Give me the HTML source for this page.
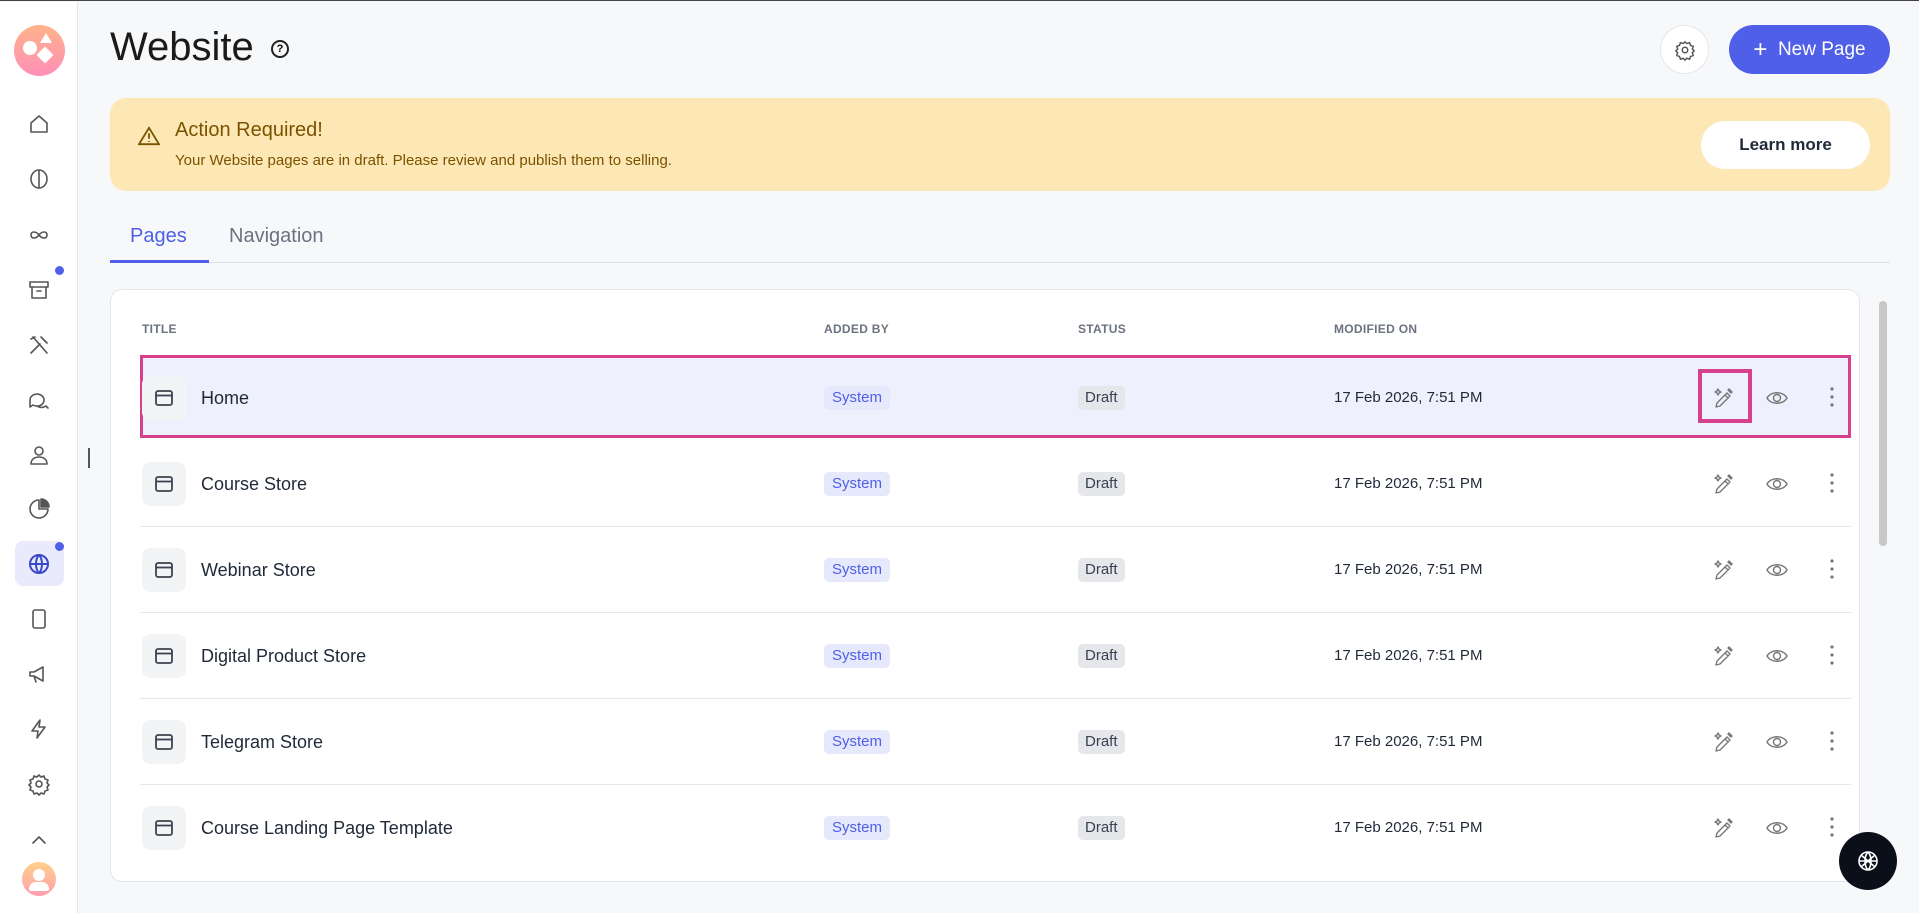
<!DOCTYPE html>
<html><head><meta charset="utf-8"><style>
*{box-sizing:border-box;margin:0;padding:0}
body{width:1919px;height:912px;overflow:hidden;background:#f7f8fa;font-family:"Liberation Sans",sans-serif;position:relative;border-top:1px solid #444}
.sb{position:absolute;left:0;top:1px;width:78px;height:911px;background:#fff;border-right:1px solid #e5e7eb}
.si{position:absolute;left:27px;width:24px;height:24px}
.si svg{width:24px;height:24px;fill:none;stroke:#555;stroke-width:1.6;stroke-linecap:round;stroke-linejoin:round}
.dot{position:absolute;left:55px;width:9px;height:9px;border-radius:50%;background:#4f5fe8}
.abs{position:absolute}
.card{position:absolute;left:110px;top:288px;width:1750px;height:593px;background:#fff;border:1px solid #e4e6ea;border-radius:12px}
.hdr{position:absolute;top:321px;font-size:12px;color:#6b7280;font-weight:bold;letter-spacing:.3px}
.row{position:absolute;left:140px;width:1711px;height:86px;border-bottom:1px solid #e5e7eb}
.ib{position:absolute;left:2px;top:21px;width:44px;height:44px;background:#f3f4f6;border-radius:8px}
.ib svg{position:absolute;left:12px;top:12px}
.t{position:absolute;left:61px;top:33px;font-size:18px;color:#1f2937}
.sys{position:absolute;left:684px;top:31px;height:24px;padding:0 8px;line-height:24px;font-size:15px;color:#4f5fe8;background:#e6e9fb;border-radius:5px}
.dr{position:absolute;left:938px;top:31px;height:24px;padding:0 7px;line-height:24px;font-size:15px;color:#374151;background:#e5e7eb;border-radius:5px}
.dt{position:absolute;left:1194px;top:34px;font-size:15px;color:#1f2937}
.ac{position:absolute;top:31px}
</style></head><body>
<div class="sb">
 <div class="abs" style="left:14px;top:23px;width:51px;height:51px;border-radius:50%;background:linear-gradient(#ffb38a,#ff8fb8)">
  <div class="abs" style="left:9px;top:16px;width:14px;height:14px;border-radius:50%;background:#fff"></div>
  <div class="abs" style="left:26px;top:8px;width:0;height:0;border-left:6px solid transparent;border-right:6px solid transparent;border-bottom:10px solid #fff"></div>
  <div class="abs" style="left:25px;top:24px;width:12px;height:12px;background:#fff;transform:rotate(45deg)"></div>
 </div>
 <div class="si" style="top:110px"><svg viewBox="0 0 24 24"><path d="M4 11l8-7 8 7v9H4z"/></svg></div>
 <div class="si" style="top:165px"><svg viewBox="0 0 24 24"><ellipse cx="12" cy="12" rx="8" ry="9"/><path d="M12 3v18"/></svg></div>
 <div class="si" style="top:221px"><svg viewBox="0 0 24 24"><path d="M12 12c-3-4-8-4-8 0s5 4 8 0 8-4 8 0-5 4-8 0"/></svg></div>
 <div class="si" style="top:276px"><svg viewBox="0 0 24 24"><rect x="3" y="4" width="18" height="5"/><path d="M5 9v11h14V9M10 13h4"/></svg></div><div class="dot" style="top:264px"></div>
 <div class="si" style="top:331px"><svg viewBox="0 0 24 24"><path d="M4 20l9-9M14 4l6 6M6 4l14 16M4 6l4-2"/></svg></div>
 <div class="si" style="top:386px"><svg viewBox="0 0 24 24"><path d="M3 12a7 6 0 1 1 3 5l-3 2zM10 18a7 6 0 0 0 9 0l2 2"/></svg></div>
 <div class="si" style="top:441px"><svg viewBox="0 0 24 24"><circle cx="12" cy="8" r="4"/><path d="M4 21c0-5 4-7 8-7s8 2 8 7z"/></svg></div>
 <div class="si" style="top:495px"><svg viewBox="0 0 24 24"><path d="M12 3a9 9 0 1 0 9 9h-9z"/><path d="M14 2a8 8 0 0 1 8 8h-8z" fill="#555"/></svg></div>
 <div class="abs" style="left:15px;top:539px;width:49px;height:45px;border-radius:8px;background:#e9ebfc"></div>
 <div class="si" style="top:550px"><svg viewBox="0 0 24 24" style="stroke:#3a47c9;stroke-width:2"><circle cx="12" cy="12" r="9"/><path d="M3 12h18M12 3c4 4 4 14 0 18M12 3c-4 4-4 14 0 18"/></svg></div><div class="dot" style="top:540px"></div>
 <div class="si" style="top:605px"><svg viewBox="0 0 24 24"><rect x="6" y="3" width="12" height="18" rx="2"/></svg></div>
 <div class="si" style="top:660px"><svg viewBox="0 0 24 24"><path d="M3 10v4h4l9 5V5L7 10zM7 14l2 6"/></svg></div>
 <div class="si" style="top:715px"><svg viewBox="0 0 24 24"><path d="M13 3L5 14h6l-1 7 8-11h-6z"/></svg></div>
 <div class="si" style="top:770px"><svg viewBox="0 0 24 24"><circle cx="12" cy="12" r="3"/><path d="M12 3l2 2 3-1 1 3 3 1-1 3 2 2-2 2 1 3-3 1-1 3-3-1-2 2-2-2-3 1-1-3-3-1 1-3-2-2 2-2-1-3 3-1 1-3 3 1z"/></svg></div>
 <div class="si" style="top:826px"><svg viewBox="0 0 24 24"><path d="M6 15l6-6 6 6"/></svg></div>
 <div class="abs" style="left:22px;top:860px;width:34px;height:34px;border-radius:50%;background:linear-gradient(#ffd08a,#ff9fb0)"><div class="abs" style="left:11px;top:7px;width:12px;height:12px;border-radius:50%;background:#fff"></div><div class="abs" style="left:7px;top:20px;width:20px;height:9px;border-radius:10px 10px 3px 3px;background:#fff"></div></div>
</div>
<div class="abs" style="left:88px;top:447px;width:2px;height:20px;background:#555"></div>

<div class="abs" style="left:110px;top:24px;font-size:40px;color:#1a1a1a">Website</div>
<div class="abs" style="left:271px;top:39px;width:18px;height:18px;border:2px solid #222;border-radius:50%;font-size:11px;font-weight:bold;text-align:center;line-height:14px">?</div>
<div class="abs" style="left:1660px;top:24px;width:49px;height:49px;border-radius:50%;background:#fff;border:1px solid #e5e7eb"><svg style="position:absolute;left:13px;top:13px" width="22" height="22" viewBox="0 0 24 24" fill="none" stroke="#555" stroke-width="1.6"><circle cx="12" cy="12" r="3"/><path d="M12 3l2 2 3-1 1 3 3 1-1 3 2 2-2 2 1 3-3 1-1 3-3-1-2 2-2-2-3 1-1-3-3-1 1-3-2-2 2-2-1-3 3-1 1-3 3 1z"/></svg></div>
<div class="abs" style="left:1729px;top:24px;width:161px;height:49px;border-radius:25px;background:#4f5fe8;color:#fff;font-size:19px;line-height:49px;text-align:center"><span style="font-size:24px;vertical-align:-2px">+</span>&nbsp; New Page</div>

<div class="abs" style="left:110px;top:97px;width:1780px;height:93px;background:#fde8b5;border-radius:16px">
 <svg class="abs" style="left:28px;top:28px" width="22" height="20" viewBox="0 0 24 22" fill="none" stroke="#7a5200" stroke-width="2"><path d="M12 2L1 20h22z"/><path d="M12 8v6M12 16.5v1"/></svg>
 <div class="abs" style="left:65px;top:21px;font-size:20px;color:#7a5200">Action Required!</div>
 <div class="abs" style="left:65px;top:54px;font-size:15px;color:#7a5200">Your Website pages are in draft. Please review and publish them to selling.</div>
 <div class="abs" style="left:1591px;top:23px;width:169px;height:48px;background:#fff;border-radius:24px;font-size:17px;font-weight:bold;color:#1f2937;text-align:center;line-height:48px">Learn more</div>
</div>

<div class="abs" style="left:130px;top:224px;font-size:20px;color:#4f5fe8">Pages</div>
<div class="abs" style="left:229px;top:224px;font-size:20px;color:#6b7280">Navigation</div>
<div class="abs" style="left:110px;top:261px;width:1780px;height:1px;background:#e0e2e6"></div>
<div class="abs" style="left:110px;top:259px;width:99px;height:3px;background:#4f5fe8"></div>

<div class="card"></div>
<div class="abs" style="left:1879px;top:300px;width:8px;height:245px;background:#c8c8c8;border-radius:4px"></div>
<div class="hdr" style="left:142px">TITLE</div>
<div class="hdr" style="left:824px">ADDED BY</div>
<div class="hdr" style="left:1078px">STATUS</div>
<div class="hdr" style="left:1334px">MODIFIED ON</div>

<div id="rows"></div>
<div class="row" style="top:354px;background:#eef0fd;border:3px solid #d6408c;height:83px"></div>
<div class="abs" style="left:1698px;top:368px;width:54px;height:54px;border:4px solid #d6408c"></div>
<script>
const names=["Home","Course Store","Webinar Store","Digital Product Store","Telegram Store","Course Landing Page Template"];
let h="";
const icon='<svg width="20" height="20" viewBox="0 0 20 20" fill="none" stroke="#3c4350" stroke-width="1.8"><rect x="2" y="3" width="16" height="14" rx="2"/><path d="M2 7.5h16"/></svg>';
const wand='<svg width="24" height="24" viewBox="0 0 24 24" fill="none" stroke="#777" stroke-width="1.4" stroke-linejoin="round"><path d="M5 21l1-4 10-10 3 3-10 10zM14 9l3 3M17 4l1-1 3 3-1 1zM7 3l1 2 2 1-2 1-1 2-1-2-2-1 2-1z"/></svg>';
const eye='<svg width="24" height="24" viewBox="0 0 24 24" fill="none" stroke="#777" stroke-width="1.4"><path d="M2 12c4-7 16-7 20 0-4 7-16 7-20 0z"/><circle cx="12" cy="12" r="3.5"/></svg>';
const dots='<svg width="6" height="22" viewBox="0 0 6 22" fill="#777"><circle cx="3" cy="3" r="1.6"/><circle cx="3" cy="11" r="1.6"/><circle cx="3" cy="19" r="1.6"/></svg>';
names.forEach((n,i)=>{const top=354+i*86;h+=`<div class="row" style="top:${top}px;${i==0?'border:none;background:transparent':''}${i==5?';border:none':''}"><div class="ib">${icon}</div><div class="t">${n}</div><div class="sys">System</div><div class="dr">Draft</div><div class="dt">17 Feb 2026, 7:51 PM</div><div class="ac" style="left:1571px">${wand}</div><div class="ac" style="left:1625px">${eye}</div><div class="ac" style="left:1689px">${dots}</div></div>`});
document.getElementById('rows').innerHTML=h;
document.body.appendChild(document.getElementById('rows'));
</script>
<div class="abs" style="left:1839px;top:831px;width:58px;height:58px;border-radius:50%;background:#0b0f1a"><svg style="position:absolute;left:17px;top:17px" width="24" height="24" viewBox="0 0 24 24" fill="none" stroke="#fff" stroke-width="1.6"><circle cx="12" cy="12" r="9"/><path d="M3 12h18M12 3c4 4 4 14 0 18M12 3c-4 4-4 14 0 18M5 6l14 12M19 6L5 18"/></svg></div>
</body></html>
